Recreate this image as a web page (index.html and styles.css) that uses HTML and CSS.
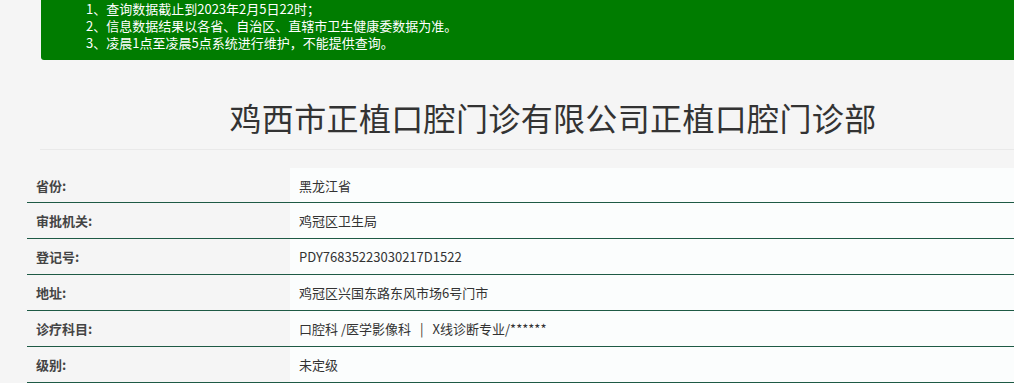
FILE: index.html
```html
<!DOCTYPE html>
<html lang="zh-CN">
<head>
<meta charset="utf-8">
<title>鸡西市正植口腔门诊有限公司正植口腔门诊部</title>
<link rel="stylesheet" href="styles.css">
</head>
<body>
<div class="page">
  <div class="notice">
    <p>1、查询数据截止到2023年2月5日22时；</p>
    <p>2、信息数据结果以各省、自治区、直辖市卫生健康委数据为准。</p>
    <p>3、凌晨1点至凌晨5点系统进行维护，不能提供查询。</p>
  </div>
  <h1 class="title">鸡西市正植口腔门诊有限公司正植口腔门诊部</h1>
  <div class="info">
    <div class="row"><div class="label">省份:</div><div class="value">黑龙江省</div></div>
    <div class="row"><div class="label">审批机关:</div><div class="value">鸡冠区卫生局</div></div>
    <div class="row"><div class="label">登记号:</div><div class="value">PDY76835223030217D1522</div></div>
    <div class="row"><div class="label">地址:</div><div class="value">鸡冠区兴国东路东风市场6号门市</div></div>
    <div class="row"><div class="label">诊疗科目:</div><div class="value">口腔科 /医学影像科<span class="sep">|</span>X线诊断专业/******</div></div>
    <div class="row"><div class="label">级别:</div><div class="value">未定级</div></div>
  </div>
</div>
</body>
</html>
```
FILE: styles.css
```css
html, body {
  margin: 0;
  padding: 0;
  overflow: hidden;
  background: #f5f5f5;
}
body {
  font-family: "Noto Sans CJK SC", "Noto Sans", sans-serif;
  color: #333;
}
.page {
  width: 1014px;
  height: 383px;
  overflow: hidden;
}
.notice {
  margin-left: 41px;
  width: 1100px;
  background: #007c00;
  color: #fff;
  font-size: 13px;
  line-height: 17px;
  padding: 0 0 9px 45px;
  border-bottom-left-radius: 3px;
  box-sizing: border-box;
}
.notice p {
  margin: 0;
}
.title {
  margin: 32px 0 0 40px;
  width: 1026px;
  font-size: 32px;
  font-weight: normal;
  line-height: 50px;
  letter-spacing: 0.35px;
  text-align: center;
  color: #333;
  padding-bottom: 7px;
  border-bottom: 1px solid #e9e9e9;
}
.info {
  margin: 18px 0 0 27px;
  width: 1100px;
  font-size: 13px;
}
.row {
  display: flex;
  height: 36px;
  box-sizing: border-box;
  border-bottom: 1px solid #1e5a45;
}
.row:first-child {
  height: 35px;
}
.label {
  width: 263px;
  padding-left: 9px;
  box-sizing: border-box;
  font-weight: bold;
  color: #444;
  display: flex;
  align-items: center;
}
.value {
  flex: 1;
  background: #fbfdfd;
  padding-left: 9px;
  display: flex;
  align-items: center;
  color: #333;
}
.sep {
  margin: 0 9px;
}
```
